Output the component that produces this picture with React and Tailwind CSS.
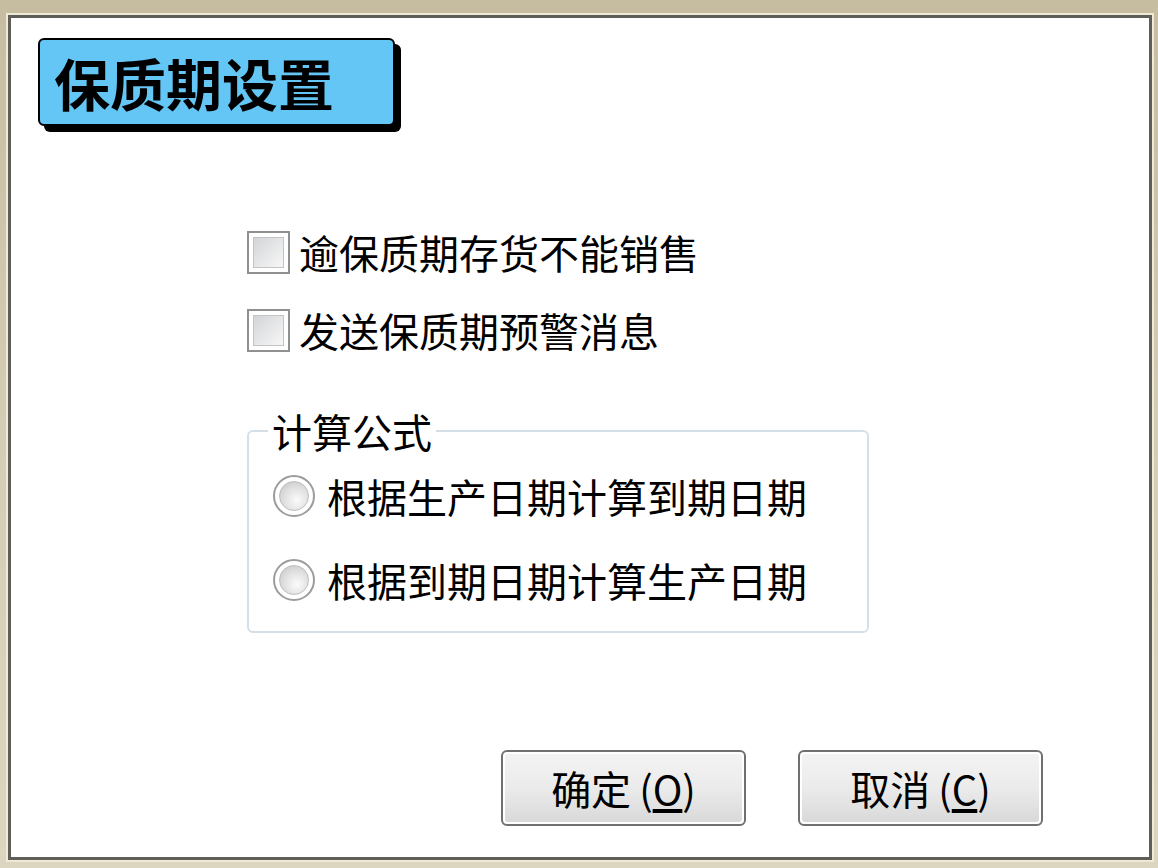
import React from 'react'

const FONT = { fontFamily: '"Noto Sans CJK SC", "Noto Sans", sans-serif' }

function CheckBox() {
  return (
    <span className="w-[43px] h-[43px] shrink-0 border-2 border-[#8f9090] bg-white p-[4px] flex">
      <span className="flex-1 border border-[#c2c4c6] bg-gradient-to-br from-[#d3d5d8] to-[#f7f7f7]" />
    </span>
  )
}

function Radio() {
  return (
    <span className="w-[42px] h-[42px] shrink-0 rounded-full border-2 border-[#9c9c9c] bg-white p-[4px] flex">
      <span className="flex-1 rounded-full border border-[#bdbdbd] bg-[radial-gradient(circle_at_60%_65%,#fbfbfb_0%,#dedede_55%,#c0c0c0_100%)]" />
    </span>
  )
}

function Btn({ label, hot }) {
  return (
    <button className="w-[245px] h-[76px] rounded-[6px] border-2 border-[#707070] p-[2px] bg-white">
      <span className="flex h-full w-full items-center justify-center rounded-[3px] bg-gradient-to-b from-[#f3f3f3] via-[#ebebeb] to-[#d9d9d9] text-[40px] leading-none text-black">
        {label}
        <span className="ml-[8px]">(<span className="underline underline-offset-4">{hot}</span>)</span>
      </span>
    </button>
  )
}

export default function App() {
  return (
    <div
      className="w-[1158px] h-[868px] bg-gradient-to-b from-[#c6bda1] via-[#d4cdb5] to-[#dcd6c1] pt-[15px] pl-[8px] pr-[6px] pb-[8px]"
      style={FONT}
    >
      {/* dialog body */}
      <div className="h-full border-[3px] border-[#5f5e59] bg-white shadow-[0_0_0_2px_#efe9d6] flex flex-col">
        {/* title badge */}
        <div className="mt-[20px] ml-[27px] w-[357px] h-[88px] rounded-[6px] border-2 border-black bg-[#63c6f4] shadow-[6px_6px_0_#000] flex items-center pl-[14px]">
          <span className="text-[56px] font-bold leading-none text-black">保质期设置</span>
        </div>

        <div className="ml-[236px] mt-[104px] flex flex-col gap-[34px]">
          <label className="flex items-center gap-[9px] h-[44px]">
            <CheckBox />
            <span className="text-[40px] leading-none text-black">逾保质期存货不能销售</span>
          </label>
          <label className="flex items-center gap-[9px] h-[44px]">
            <CheckBox />
            <span className="text-[40px] leading-none text-black">发送保质期预警消息</span>
          </label>
        </div>

        <fieldset className="ml-[236px] mt-[59px] w-[622px] rounded-[6px] border-2 border-[#d5dfe7] pl-[24px] pb-[29px]">
          <legend className="-ml-[5px] px-[4px] text-[40px] leading-[40px] text-black">计算公式</legend>
          <div className="mt-[23px] flex flex-col gap-[40px]">
            <label className="flex items-center gap-[12px] h-[44px]">
              <Radio />
              <span className="text-[40px] leading-none text-black">根据生产日期计算到期日期</span>
            </label>
            <label className="flex items-center gap-[12px] h-[44px]">
              <Radio />
              <span className="text-[40px] leading-none text-black">根据到期日期计算生产日期</span>
            </label>
          </div>
        </fieldset>

        <div className="mt-[117px] flex justify-end gap-[52px] pr-[106px]">
          <Btn label="确定" hot="O" />
          <Btn label="取消" hot="C" />
        </div>
      </div>
    </div>
  )
}
